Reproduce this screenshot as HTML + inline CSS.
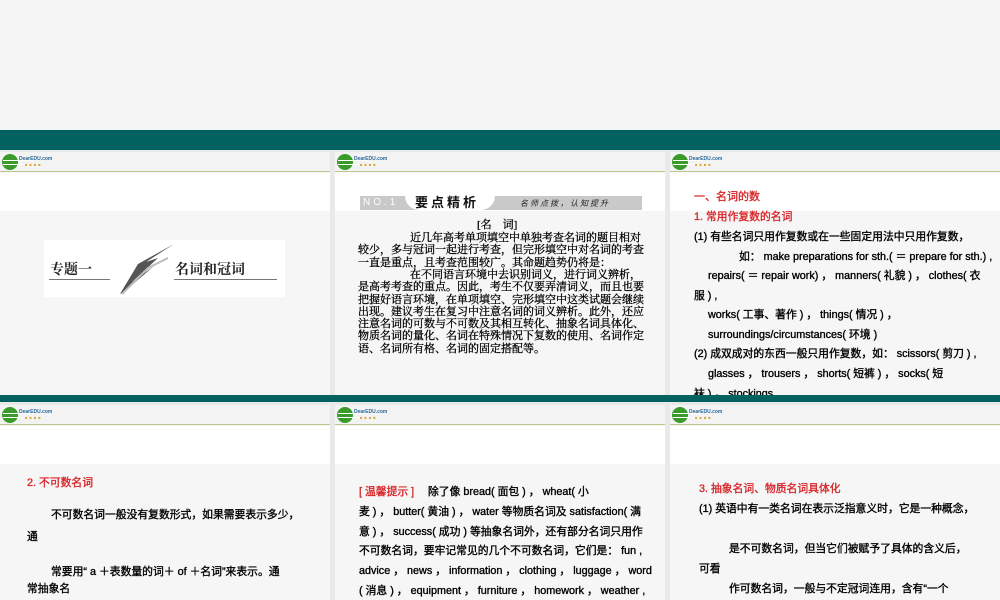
<!DOCTYPE html>
<html><head><meta charset="utf-8"><style>
*{margin:0;padding:0;box-sizing:border-box}
body{width:1000px;height:600px;overflow:hidden;background:#e9e9e9;position:relative;font-family:"Liberation Sans","Noto Sans CJK SC",sans-serif}
.top{position:absolute;left:0;top:0;width:1000px;height:130px;background:#f5f5f5}
.band{position:absolute;left:0;width:1000px;background:#02625f}
.slide{position:absolute;width:330px;overflow:hidden;background:#f6f6f6}
.hd{position:absolute;left:0;top:0;width:100%;height:20px;background:#f3f3f3;border-bottom:1px solid #b8c98a}
.wh{position:absolute;left:0;top:21px;width:100%;height:38px;background:#fff}
.logo{position:absolute;left:2px;top:2px;width:16px;height:16px;border-radius:50%;background:#3a9a2a}
.logo:after{content:"";position:absolute;left:1px;top:6px;width:30px;height:3px;border-top:1px solid #fff;border-bottom:1px solid #fff}
.lt{position:absolute;left:19px;top:4px;font-size:5px;color:#2a6a9a;font-weight:bold}
.lt2{position:absolute;left:25px;top:10px;font-size:4px;color:#d8a030;letter-spacing:2px}
.t{position:absolute;font-size:10.8px;color:#000;white-space:nowrap;-webkit-text-stroke:0.35px #000}
.r{color:#d8262a;-webkit-text-stroke:0.35px #d8262a}
.c{position:absolute;font-size:11px;color:#000;line-height:12.3px;font-family:"Liberation Serif","Noto Serif CJK SC",serif;-webkit-text-stroke:0.3px #000}
</style></head><body>
<div class="top"></div>
<div class="band" style="top:130px;height:20px"></div>

<!-- row1 -->
<div class="slide" style="left:0;top:152px;height:243px">
 <div class="hd"></div><div class="logo"></div><div class="lt">DearEDU.com</div><div class="lt2">■■■■</div>
 <div class="wh"></div>
 <div style="position:absolute;left:44px;top:88px;width:241px;height:57px;background:#fff"></div>
 <div style="position:absolute;left:50px;top:107px;font-size:14px;font-weight:bold;font-family:'Noto Serif CJK SC',serif;color:#222">专题一</div>
 <div style="position:absolute;left:49px;top:127px;width:61px;border-top:1px solid #777"></div>
 <svg style="position:absolute;left:118px;top:92px" width="58" height="52"><path d="M2 50 L20 20 L56 0 L28 18 L40 14 L14 38 L36 22 L6 48Z" fill="#555"/><path d="M4 50 L30 24 L50 14" stroke="#bbb" stroke-width="2" fill="none"/></svg>
 <div style="position:absolute;left:175px;top:107px;font-size:14px;font-weight:bold;font-family:'Noto Serif CJK SC',serif;color:#222">名词和冠词</div>
 <div style="position:absolute;left:174px;top:127px;width:103px;border-top:1px solid #777"></div>
</div>
<div class="slide" style="left:335px;top:152px;height:243px">
 <div class="hd"></div><div class="logo"></div><div class="lt">DearEDU.com</div><div class="lt2">■■■■</div>
 <div class="wh"></div>
 <div style="position:absolute;left:25px;top:44px;width:282px;height:14px;background:#c9c9c9"></div>
 <div style="position:absolute;left:28px;top:45px;font-size:10px;color:#fff;letter-spacing:3px">NO.1</div>
 <div style="position:absolute;left:70px;top:40px;width:90px;height:18px;background:#fff;border-radius:0 0 14px 14px"></div>
 <div style="position:absolute;left:80px;top:40px;font-size:13px;font-weight:bold;color:#111;letter-spacing:3px">要点精析</div>
 <div style="position:absolute;left:185px;top:46px;font-size:8px;font-style:italic;color:#222;letter-spacing:2px">名师点拨，认知提升</div>
 <div class="c r" style="left:142px;top:67px">[名　词]</div>
 <div class="c" style="left:23px;top:80px;width:290px;text-indent:52px">近几年高考单项填空中单独考查名词的题目相对较少，多与冠词一起进行考查，但完形填空中对名词的考查一直是重点，且考查范围较广。其命题趋势仍将是：</div>
 <div class="c" style="left:23px;top:117px;width:290px;text-indent:52px">在不同语言环境中去识别词义，进行词义辨析，是高考考查的重点。因此，考生不仅要弄清词义，而且也要把握好语言环境，在单项填空、完形填空中这类试题会继续出现。建议考生在复习中注意名词的词义辨析。此外，还应注意名词的可数与不可数及其相互转化、抽象名词具体化、物质名词的量化、名词在特殊情况下复数的使用、名词作定语、名词所有格、名词的固定搭配等。</div>
</div>
<div class="slide" style="left:670px;top:152px;height:243px">
 <div class="hd"></div><div class="logo"></div><div class="lt">DearEDU.com</div><div class="lt2">■■■■</div>
 <div class="wh"></div>
 <div class="t r" style="left:24px;top:36px;font-size:11px">一、名词的数</div>
 <div class="t r" style="left:24px;top:56px">1. 常用作复数的名词</div>
 <div class="t" style="left:24px;top:76px">(1) 有些名词只用作复数或在一些固定用法中只用作复数，</div>
 <div class="t" style="left:69px;top:96px">如：  make preparations for sth.( ＝ prepare for sth.) ,</div>
 <div class="t" style="left:38px;top:115px">repairs( ＝ repair work) ，  manners( 礼貌 ) ，  clothes( 衣</div>
 <div class="t" style="left:24px;top:135px">服 ) ,</div>
 <div class="t" style="left:38px;top:154px">works( 工事、著作 ) ，  things( 情况 ) ，</div>
 <div class="t" style="left:38px;top:174px">surroundings/circumstances( 环境 )</div>
 <div class="t" style="left:24px;top:193px">(2) 成双成对的东西一般只用作复数，如：  scissors( 剪刀 ) ,</div>
 <div class="t" style="left:38px;top:213px">glasses ，  trousers ，  shorts( 短裤 ) ，  socks( 短</div>
 <div class="t" style="left:24px;top:233px">袜 ) ，  stockings</div>
</div>

<div class="band" style="top:395px;height:7px"></div>

<!-- row2 -->
<div class="slide" style="left:0;top:405px;height:195px">
 <div class="hd"></div><div class="logo"></div><div class="lt">DearEDU.com</div><div class="lt2">■■■■</div>
 <div class="wh"></div>
 <div class="t r" style="left:27px;top:69px">2. 不可数名词</div>
 <div class="t" style="left:51px;top:101px">不可数名词一般没有复数形式，如果需要表示多少，</div>
 <div class="t" style="left:27px;top:123px">通</div>
 <div class="t" style="left:51px;top:158px">常要用“ a ＋表数量的词＋ of ＋名词”来表示。通</div>
 <div class="t" style="left:27px;top:175px">常抽象名</div>
</div>
<div class="slide" style="left:335px;top:405px;height:195px">
 <div class="hd"></div><div class="logo"></div><div class="lt">DearEDU.com</div><div class="lt2">■■■■</div>
 <div class="wh"></div>
 <div class="t" style="left:24px;top:78px"><span class="r">[ 温馨提示 ]</span>　 除了像 bread( 面包 ) ，  wheat( 小</div>
 <div class="t" style="left:24px;top:98px">麦 ) ，  butter( 黄油 ) ，  water 等物质名词及 satisfaction( 满</div>
 <div class="t" style="left:24px;top:118px">意 ) ，  success( 成功 ) 等抽象名词外，还有部分名词只用作</div>
 <div class="t" style="left:24px;top:137px">不可数名词，要牢记常见的几个不可数名词，它们是：  fun ,</div>
 <div class="t" style="left:24px;top:157px">advice ，  news ，  information ，  clothing ，  luggage ，  word</div>
 <div class="t" style="left:24px;top:177px">( 消息 ) ，  equipment ，  furniture ，  homework ，  weather ,</div>
</div>
<div class="slide" style="left:670px;top:405px;height:195px">
 <div class="hd"></div><div class="logo"></div><div class="lt">DearEDU.com</div><div class="lt2">■■■■</div>
 <div class="wh"></div>
 <div class="t r" style="left:29px;top:75px">3. 抽象名词、物质名词具体化</div>
 <div class="t" style="left:29px;top:95px">(1) 英语中有一类名词在表示泛指意义时，它是一种概念，</div>
 <div class="t" style="left:59px;top:135px">是不可数名词，但当它们被赋予了具体的含义后，</div>
 <div class="t" style="left:29px;top:155px">可看</div>
 <div class="t" style="left:59px;top:175px">作可数名词，一般与不定冠词连用，含有“一个</div>
</div>
</body></html>
